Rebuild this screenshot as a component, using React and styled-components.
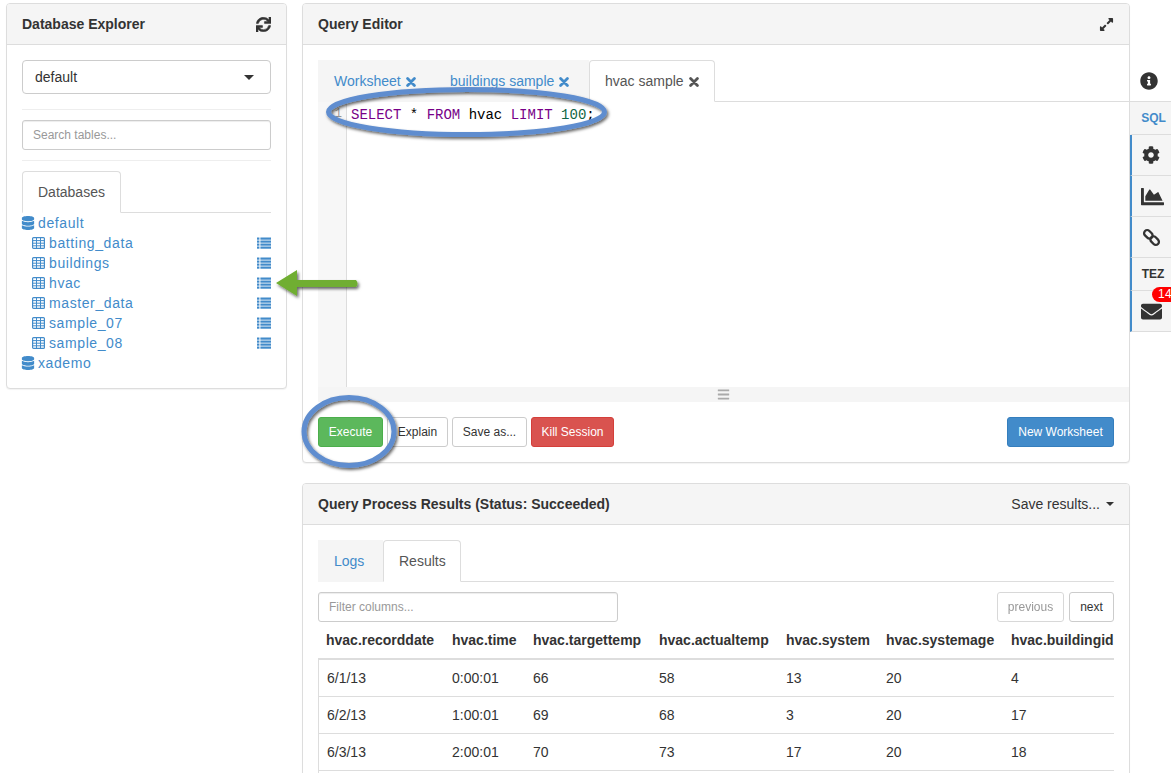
import React from "react";
import styled, { createGlobalStyle } from "styled-components";
import { FaSync, FaDatabase, FaInfoCircle, FaCog, FaChartArea, FaEnvelope, FaExpandAlt, FaBars } from "react-icons/fa";

const Global = createGlobalStyle`
  html, body { margin: 0; padding: 0; height: 773px; overflow: hidden; background: #fff; }
  body { font-family: "Liberation Sans", Arial, sans-serif; font-size: 14px; line-height: 20px; color: #333; }
  * { box-sizing: border-box; }
`;

const Page = styled.div`
  position: relative;
  display: flex;
  align-items: flex-start;
  width: 1171px;
  height: 773px;
  padding: 3px 0 0 6px;
  overflow: hidden;
`;
const LeftColumn = styled.div`width: 281px; margin-right: 15px; flex: none;`;
const MainColumn = styled.div`width: 828px; flex: none;`;

const Panel = styled.section`
  background: #fff;
  border: 1px solid #ddd;
  border-radius: 4px;
  box-shadow: 0 1px 1px rgba(0,0,0,.05);
  margin-bottom: 20px;
`;
const PanelHeading = styled.header`
  display: flex;
  align-items: center;
  justify-content: space-between;
  height: 41px;
  padding: 0 15px;
  background: #f5f5f5;
  border-bottom: 1px solid #ddd;
  border-radius: 3px 3px 0 0;
`;
const PanelTitle = styled.h3`margin: 0; font-size: 14px; line-height: 20px; font-weight: 700; color: #333;`;
const HeadingIcon = styled.span`display: inline-flex; color: #333; font-size: 15px;`;
const PanelBody = styled.div`padding: 15px;`;
const EditorBody = styled.div`padding: 15px 0 15px 15px;`;

const Dropdown = styled.div`
  display: flex;
  align-items: center;
  justify-content: space-between;
  height: 34px;
  padding: 0 16px 0 12px;
  border: 1px solid #ccc;
  border-radius: 4px;
  color: #333;
`;
const Caret = styled.span`
  display: inline-block;
  width: 0; height: 0;
  border-top: ${p => (p.$small ? 4 : 5)}px solid #333;
  border-left: ${p => (p.$small ? 4 : 5)}px solid transparent;
  border-right: ${p => (p.$small ? 4 : 5)}px solid transparent;
`;
const Rule = styled.hr`margin: ${p => p.$top}px 0 10px; border: 0; border-top: 1px solid #eee;`;
const SmallInput = styled.input`
  display: block;
  width: ${p => p.$width || "100%"};
  height: 30px;
  padding: 5px 10px;
  font: 12px/18px "Liberation Sans", Arial, sans-serif;
  border: 1px solid #ccc;
  border-radius: 3px;
  box-shadow: inset 0 1px 1px rgba(0,0,0,.075);
  &::placeholder { color: #999; opacity: 1; }
`;

const TabBar = styled.div`display: flex; border-bottom: 1px solid #ddd; height: 42px;`;
const Tab = styled.div`
  display: flex;
  align-items: center;
  gap: 4px;
  width: ${p => p.$width}px;
  height: 42px;
  padding: 0 0 0 15px;
  white-space: nowrap;
  border: 1px solid ${p => (p.$active ? "#ddd" : "#f5f5f5")};
  border-bottom-color: ${p => (p.$active ? "#fff" : "#f5f5f5")};
  border-radius: ${p => (p.$active ? "4px 4px 0 0" : "0")};
  background: ${p => (p.$active ? "#fff" : "#f5f5f5")};
  color: ${p => (p.$active ? "#555" : "#428bca")};
`;
const CloseGlyph = styled.svg`flex: none; width: 10px; height: 10px; margin: 1px 0 0 1px;`;
const CloseIcon = () => (
  <CloseGlyph viewBox="0 0 10 10">
    <path d="M1.6 1.6 L8.4 8.4 M8.4 1.6 L1.6 8.4" fill="none" stroke="currentColor" strokeWidth="2.8" strokeLinecap="round" />
  </CloseGlyph>
);

const Tree = styled.ul`margin: 0; padding: 0; list-style: none; color: #428bca; letter-spacing: .6px;`;
const TreeRow = styled.li`
  display: flex;
  align-items: center;
  height: 20px;
  padding-left: ${p => (p.$nested ? "10px" : "0")};
`;
const TreeLabel = styled.span`margin-left: 4px; flex: 1;`;
const DbIcon = styled(FaDatabase)`flex: none; font-size: 14px; margin: 0 -1px;`;
const TableGlyph = styled.svg`flex: none; width: 13px; height: 12px;`;
const TableIcon = () => (
  <TableGlyph viewBox="0 0 13 12">
    <rect x=".6" y=".6" width="11.8" height="10.8" rx="1" fill="none" stroke="currentColor" strokeWidth="1.2" />
    <path d="M.6 3.6H12.4M.6 6.2H12.4M.6 8.8H12.4M4.5.6V11.4M8.5.6V11.4" fill="none" stroke="currentColor" strokeWidth="1" />
  </TableGlyph>
);
const ListGlyph = styled.svg`flex: none; width: 14px; height: 12px;`;
const ListIcon = () => (
  <ListGlyph viewBox="0 0 14 12" fill="currentColor">
    {[0.5, 3.5, 6.5, 9.5].map(y => (
      <React.Fragment key={y}>
        <rect x="0" y={y} width="2.4" height="2.2" />
        <rect x="3.4" y={y} width="10.6" height="2.2" />
      </React.Fragment>
    ))}
  </ListGlyph>
);

const EditorFrame = styled.div`
  display: flex;
  height: 285px;
  font: 14px/24px "Liberation Mono", "Courier New", monospace;
  color: #000;
`;
const Gutter = styled.div`
  width: 29px;
  flex: none;
  padding: 0 4px 0 0;
  text-align: right;
  color: #999;
  background: #f7f7f7;
  border-right: 1px solid #ddd;
  font-size: 12px;
`;
const CodeLine = styled.div`padding: 1px 0 0 4px; white-space: pre;`;
const Keyword = styled.span`color: #708;`;
const NumberToken = styled.span`color: #164;`;
const ResizeBar = styled.div`
  display: flex;
  align-items: center;
  justify-content: center;
  height: 15px;
  background: #f5f5f5;
  color: #aaa;
  font-size: 13px;
`;

const Actions = styled.div`
  display: flex;
  align-items: center;
  gap: 4px;
  margin-top: 15px;
  padding-right: 15px;
`;
const palette = {
  default: ["#fff", "#ccc", "#333"],
  success: ["#5cb85c", "#4cae4c", "#fff"],
  danger: ["#d9534f", "#d43f3a", "#fff"],
  primary: ["#428bca", "#357ebd", "#fff"],
  disabled: ["#fff", "#ccc", "#777"],
};
const Button = styled.button`
  width: ${p => p.$width}px;
  height: 30px;
  padding: 0;
  font: 12px/18px "Liberation Sans", Arial, sans-serif;
  white-space: nowrap;
  border-radius: 3px;
  background: ${p => palette[p.$kind || "default"][0]};
  border: 1px solid ${p => palette[p.$kind || "default"][1]};
  color: ${p => palette[p.$kind || "default"][2]};
  opacity: ${p => (p.$kind === "disabled" ? 0.75 : 1)};
`;
const Spacer = styled.div`flex: 1;`;

const SaveResults = styled.div`display: flex; align-items: center; gap: 6px; color: #333;`;
const FilterRow = styled.div`display: flex; justify-content: space-between; margin-top: 10px;`;
const Pager = styled.div`display: flex; gap: 5px;`;

const TableClip = styled.div`overflow: hidden; width: 796px; height: 200px;`;
const Table = styled.table`
  table-layout: fixed;
  width: 802px;
  border-collapse: separate;
  border-spacing: 0;
  white-space: nowrap;
  font-size: 14px;
  line-height: 20px;
`;
const Th = styled.th`
  width: ${p => p.$width}px;
  text-align: left;
  font-weight: 700;
  padding: 8px;
  border-bottom: 2px solid #ddd;
`;
const Td = styled.td`
  padding: 8px;
  border-bottom: 1px solid #ddd;
  &:first-child { border-left: 1px solid #ddd; }
`;

const SideNav = styled.nav`width: 41px; flex: none; padding-top: 63px;`;
const InfoSlot = styled.div`
  display: flex;
  align-items: center;
  justify-content: center;
  height: 36px;
  padding: 0 3px 6px 0;
  border-bottom: 1px solid #ddd;
  font-size: 18px;
  color: #333;
`;
const NavItem = styled.div`
  position: relative;
  display: flex;
  align-items: center;
  justify-content: center;
  height: ${p => (p.$text ? 33 : 41)}px;
  padding-left: ${p => p.$shift || 0}px;
  background: #f5f5f5;
  border-bottom: 1px solid #ddd;
  border-left: 2px solid ${p => (p.$accent ? "#428bca" : "#f5f5f5")};
  color: ${p => (p.$blue ? "#428bca" : "#333")};
  font-size: ${p => (p.$text ? "12px" : `${p.$size || 18}px`)};
  font-weight: 700;
`;
const LinkGlyph = styled.svg`width: 19px; height: 19px; margin-right: 1px;`;
const LinkIcon = () => (
  <LinkGlyph viewBox="0 0 19 19" fill="none" stroke="currentColor" strokeWidth="2.3">
    <rect x="1.6" y="3.2" width="9.5" height="6.2" rx="3.1" transform="rotate(45 6.35 6.3)" />
    <rect x="7.9" y="9.5" width="9.5" height="6.2" rx="3.1" transform="rotate(45 12.65 12.6)" />
  </LinkGlyph>
);
const Badge = styled.span`
  position: absolute;
  top: -4px;
  left: 20px;
  height: 15px;
  min-width: 24px;
  padding: 0 6px;
  border-radius: 8px;
  background: #f00;
  color: #fff;
  font-size: 12px;
  line-height: 15px;
  font-weight: 400;
  letter-spacing: .3px;
`;

const Annotations = styled.svg`
  position: absolute;
  left: 0;
  top: 0;
  pointer-events: none;
`;

const tables = ["batting_data", "buildings", "hvac", "master_data", "sample_07", "sample_08"];
const columns = [
  ["hvac.recorddate", 126], ["hvac.time", 81], ["hvac.targettemp", 126], ["hvac.actualtemp", 127],
  ["hvac.system", 100], ["hvac.systemage", 125], ["hvac.buildingid", 117],
];
const rows = [
  ["6/1/13", "0:00:01", "66", "58", "13", "20", "4"],
  ["6/2/13", "1:00:01", "69", "68", "3", "20", "17"],
  ["6/3/13", "2:00:01", "70", "73", "17", "20", "18"],
];

export default function App() {
  return (
    <Page>
      <Global />
      <LeftColumn>
        <Panel>
          <PanelHeading>
            <PanelTitle>Database Explorer</PanelTitle>
            <HeadingIcon><FaSync stroke="currentColor" strokeWidth="18" /></HeadingIcon>
          </PanelHeading>
          <PanelBody>
            <Dropdown>default<Caret /></Dropdown>
            <Rule $top={15} />
            <SmallInput placeholder="Search tables..." />
            <Rule $top={10} />
            <TabBar><Tab $active $width={99}>Databases</Tab></TabBar>
            <Tree>
              <TreeRow><DbIcon /><TreeLabel>default</TreeLabel></TreeRow>
              {tables.map(t => (
                <TreeRow $nested key={t}>
                  <TableIcon />
                  <TreeLabel>{t}</TreeLabel>
                  <ListIcon />
                </TreeRow>
              ))}
              <TreeRow><DbIcon /><TreeLabel>xademo</TreeLabel></TreeRow>
            </Tree>
          </PanelBody>
        </Panel>
      </LeftColumn>

      <MainColumn>
        <Panel>
          <PanelHeading>
            <PanelTitle>Query Editor</PanelTitle>
            <HeadingIcon><FaExpandAlt /></HeadingIcon>
          </PanelHeading>
          <EditorBody>
            <TabBar>
              <Tab $width={116}>Worksheet <CloseIcon /></Tab>
              <Tab $width={155}>buildings sample <CloseIcon /></Tab>
              <Tab $active $width={126}>hvac sample <CloseIcon /></Tab>
            </TabBar>
            <EditorFrame>
              <Gutter>1</Gutter>
              <CodeLine>
                <Keyword>SELECT</Keyword> * <Keyword>FROM</Keyword> hvac <Keyword>LIMIT</Keyword> <NumberToken>100</NumberToken>;
              </CodeLine>
            </EditorFrame>
            <ResizeBar><FaBars /></ResizeBar>
            <Actions>
              <Button $kind="success" $width={65}>Execute</Button>
              <Button $width={61}>Explain</Button>
              <Button $width={75}>Save as...</Button>
              <Button $kind="danger" $width={83}>Kill Session</Button>
              <Spacer />
              <Button $kind="primary" $width={107}>New Worksheet</Button>
            </Actions>
          </EditorBody>
        </Panel>

        <Panel>
          <PanelHeading>
            <PanelTitle>Query Process Results (Status: Succeeded)</PanelTitle>
            <SaveResults>Save results... <Caret $small /></SaveResults>
          </PanelHeading>
          <PanelBody>
            <TabBar>
              <Tab $width={65}>Logs</Tab>
              <Tab $active $width={78}>Results</Tab>
            </TabBar>
            <FilterRow>
              <SmallInput $width="300px" placeholder="Filter columns..." />
              <Pager>
                <Button $kind="disabled" $width={67}>previous</Button>
                <Button $width={45}>next</Button>
              </Pager>
            </FilterRow>
            <TableClip>
              <Table>
                <thead>
                  <tr>{columns.map(([c, w]) => <Th key={c} $width={w}>{c}</Th>)}</tr>
                </thead>
                <tbody>
                  {rows.map(r => (
                    <tr key={r[0]}>{r.map((v, i) => <Td key={i}>{v}</Td>)}</tr>
                  ))}
                  <tr><Td colSpan={7}>&nbsp;</Td></tr>
                </tbody>
              </Table>
            </TableClip>
          </PanelBody>
        </Panel>
      </MainColumn>

      <SideNav>
        <InfoSlot><FaInfoCircle /></InfoSlot>
        <NavItem $text $blue $shift={4}>SQL</NavItem>
        <NavItem $accent><FaCog style={{ marginRight: 2 }} /></NavItem>
        <NavItem $accent $size={23} $shift={2}><FaChartArea /></NavItem>
        <NavItem $accent><LinkIcon /></NavItem>
        <NavItem $accent $text $shift={3}>TEZ</NavItem>
        <NavItem $accent $size={21}><FaEnvelope /><Badge>14</Badge></NavItem>
      </SideNav>

      <Annotations width="1171" height="773" viewBox="0 0 1171 773">
        <defs>
          <filter id="annotationShadow" x="-20%" y="-30%" width="140%" height="170%">
            <feDropShadow dx="1.5" dy="2" stdDeviation="1.5" floodColor="#000" floodOpacity=".6" />
          </filter>
        </defs>
        <g filter="url(#annotationShadow)">
          <ellipse cx="466.5" cy="112" rx="138" ry="22.5" fill="none" stroke="#5f8dcf" strokeWidth="5" />
          <ellipse cx="349" cy="431.5" rx="45" ry="34" fill="none" stroke="#5f8dcf" strokeWidth="5" />
          <path d="M276 283 L297 270 L297 280 L356 280 Q359 283.5 356 287 L297 287 L297 296 Z" fill="#6fae30" />
        </g>
      </Annotations>
    </Page>
  );
}
